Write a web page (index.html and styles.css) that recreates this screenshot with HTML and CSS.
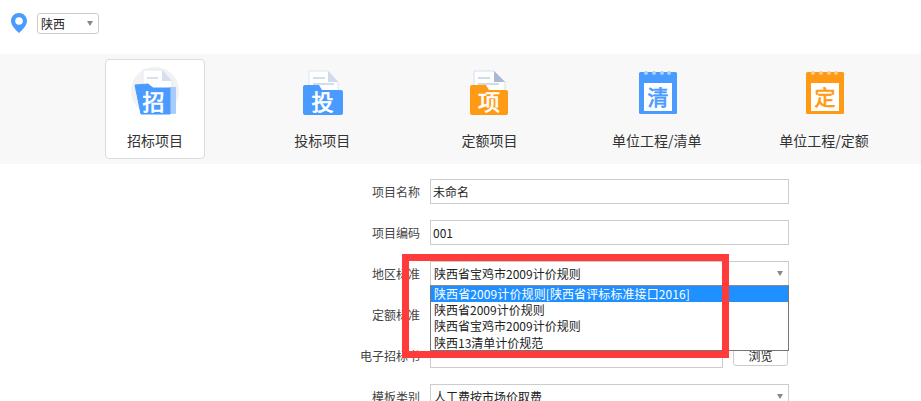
FILE: index.html
```html
<!DOCTYPE html>
<html lang="zh-CN">
<head>
<meta charset="utf-8">
<title>新建项目</title>
<link rel="stylesheet" href="styles.css">
</head>
<body>
<header class="region">
  <svg class="pin" width="16" height="20" viewBox="0 0 16 20" aria-hidden="true">
    <path fill-rule="evenodd" fill="#4a9bff" d="M8 0C3.6 0 0 3.5 0 7.8 0 12.6 4.6 17 8 20c3.4-3 8-7.4 8-12.2C16 3.5 12.4 0 8 0zm0 4.2a3.8 3.8 0 1 1 0 7.6 3.8 3.8 0 0 1 0-7.6z"/>
  </svg>
  <div class="region-select"><span>陕西</span><i class="arrow"></i></div>
</header>

<nav class="tabs">
  <div class="tab active">
    <svg class="tab-icon" width="60" height="60" viewBox="0 0 60 60" aria-hidden="true">
      <circle cx="30" cy="27" r="24" fill="#f1f2f4"/>
      <path d="M18 6h19l10 11v28H18z" fill="#fff" stroke="#e3e9f2"/>
      <path d="M37 6l10 11H37z" fill="#d5dfee"/>
      <path d="M22 13h11v2H22z" fill="#d7e1ee"/>
      <path d="M44 23h7v26a1 1 0 0 1-1 1h-6z" fill="#a8cdfb"/>
      <path d="M10 21l13-1 5 4 17 0v26H16z" fill="#4a9bff" stroke="#4a9bff" stroke-linejoin="round"/>
      <text class="glyph on-fill" x="28.5" y="46" font-size="22">招</text>
    </svg>
    <span class="tab-label">招标项目</span>
  </div>
  <div class="tab">
    <svg class="tab-icon" width="60" height="60" viewBox="0 0 60 60" aria-hidden="true">
      <path d="M17 7h19l10 11v26H17z" fill="#fff" stroke="#dce6f3"/>
      <path d="M36 7l10 11H36z" fill="#cfdbed"/>
      <path d="M21 13h12v2H21zM21 19h21v2H21z" fill="#d3deec"/>
      <path d="M11 23a2 2 0 0 1 2-2h14l3 5h19a2 2 0 0 1 2 2v21a2 2 0 0 1-2 2H13a2 2 0 0 1-2-2z" fill="#4a9bff"/>
      <text class="glyph on-fill" x="30.5" y="46" font-size="22">投</text>
    </svg>
    <span class="tab-label">投标项目</span>
  </div>
  <div class="tab">
    <svg class="tab-icon" width="60" height="60" viewBox="0 0 60 60" aria-hidden="true">
      <path d="M14 7h20l11 11v26H14z" fill="#fff" stroke="#d5e0ee"/>
      <path d="M34 7l11 11H34z" fill="#a9bad3"/>
      <path d="M18 13h12v2H18zM18 19h21v2H18z" fill="#cfdbe9"/>
      <path d="M10 23a2 2 0 0 1 2-2h14l3 5h17a2 2 0 0 1 2 2v21a2 2 0 0 1-2 2H12a2 2 0 0 1-2-2z" fill="#ff9a14"/>
      <text class="glyph on-fill" x="29" y="46" font-size="22">项</text>
    </svg>
    <span class="tab-label">定额项目</span>
  </div>
  <div class="tab">
    <svg class="tab-icon" width="60" height="60" viewBox="0 0 60 60" aria-hidden="true">
      <rect x="12" y="8" width="38" height="42" rx="1.5" fill="#4a9bff"/>
      <g fill="#a9cffc"><circle cx="19" cy="9" r="2"/><circle cx="27" cy="9" r="2"/><circle cx="35" cy="9" r="2"/><circle cx="42" cy="9" r="2"/></g>
      <rect x="17" y="19" width="28" height="28" fill="#fff"/>
      <text class="glyph on-paper-blue" x="31" y="41" font-size="21">清</text>
    </svg>
    <span class="tab-label">单位工程/清单</span>
  </div>
  <div class="tab">
    <svg class="tab-icon" width="60" height="60" viewBox="0 0 60 60" aria-hidden="true">
      <rect x="12" y="8" width="38" height="42" rx="1.5" fill="#ff9a14"/>
      <g fill="#fdc98a"><circle cx="19" cy="9" r="2"/><circle cx="27" cy="9" r="2"/><circle cx="35" cy="9" r="2"/><circle cx="42" cy="9" r="2"/></g>
      <rect x="17" y="19" width="28" height="28" fill="#fff"/>
      <text class="glyph on-paper-orange" x="31" y="41" font-size="21">定</text>
    </svg>
    <span class="tab-label">单位工程/定额</span>
  </div>
</nav>

<main class="form">
  <div class="row">
    <label class="label">项目名称</label>
    <input class="field" type="text" value="未命名" readonly>
  </div>
  <div class="row">
    <label class="label">项目编码</label>
    <input class="field" type="text" value="001" readonly>
  </div>
  <div class="row has-menu">
    <label class="label">地区标准</label>
    <div class="field select"><span>陕西省宝鸡市2009计价规则</span><i class="arrow"></i></div>
    <ul class="menu">
      <li class="selected">陕西省2009计价规则[陕西省评标标准接口2016]</li>
      <li>陕西省2009计价规则</li>
      <li>陕西省宝鸡市2009计价规则</li>
      <li>陕西13清单计价规范</li>
    </ul>
  </div>
  <div class="row">
    <label class="label">定额标准</label>
    <div class="field select"><span></span><i class="arrow"></i></div>
  </div>
  <div class="row">
    <label class="label">电子招标书</label>
    <input class="field short" type="text" readonly>
    <button class="browse" type="button">浏览</button>
  </div>
  <div class="row">
    <label class="label">模板类别</label>
    <div class="field select"><span>人工费按市场价取费</span><i class="arrow"></i></div>
  </div>
</main>

<div class="callout"></div>
</body>
</html>
```

FILE: styles.css
```css
* { box-sizing: border-box; }

html, body {
  margin: 0;
  height: 401px;
  overflow: hidden;
  background: #fff;
}

body {
  position: relative;
  font-family: "Noto Sans CJK SC", "Liberation Sans", sans-serif;
  font-size: 12px;
  color: #333;
}

.region {
  display: flex;
  align-items: flex-start;
  gap: 10px;
  height: 54px;
  padding: 13px 0 0 11px;
}

.region-select {
  display: flex;
  align-items: center;
  justify-content: space-between;
  width: 62px;
  height: 21px;
  padding: 0 5px 0 3px;
  border: 1px solid #ccc;
  border-radius: 3px;
  color: #222;
}

.arrow {
  flex: none;
  width: 0;
  height: 0;
  border-style: solid;
  border-width: 5px 3.5px 0;
  border-color: #888 transparent transparent;
}

.tabs {
  display: flex;
  height: 110px;
  padding: 5px 0 0 71.5px;
  background: #f8f8f8;
}

.tab {
  display: flex;
  flex-direction: column;
  align-items: center;
  flex: none;
  width: 167.25px;
  height: 100px;
  padding-top: 4px;
  border: 1px solid transparent;
}

.tab.active {
  flex: none;
  width: 100px;
  margin: 0 33.6px;
  background: #fff;
  border-color: #d7dee2;
  border-radius: 4px;
}

.tab-icon { display: block; flex: none; }

.glyph {
  font-family: "Noto Sans CJK SC", sans-serif;
  font-weight: 400;
  stroke-width: 0.7px;
  text-anchor: middle;
}

.on-fill { fill: #fff; stroke: #fff; }
.on-paper-blue { fill: #4a9bff; stroke: #4a9bff; }
.on-paper-orange { fill: #ff9a14; stroke: #ff9a14; }

.tab-label {
  margin-top: 6px;
  font-size: 14px;
  line-height: 20px;
  white-space: nowrap;
  color: #333;
}

.form {
  display: flex;
  flex-direction: column;
  gap: 16px;
  padding: 15px 0 0 350px;
}

.row {
  position: relative;
  display: flex;
  align-items: flex-start;
  height: 25px;
}

.label {
  flex: none;
  width: 70px;
  margin-right: 10px;
  line-height: 25px;
  text-align: right;
  color: #444;
}

.field {
  flex: none;
  width: 359px;
  height: 25px;
  margin: 0;
  padding: 0 2px;
  border: 1px solid #ccc;
  border-radius: 0;
  outline: 0;
  font: inherit;
  line-height: 23px;
  color: #222;
  background: #fff;
}

.field.short { width: 293px; }

.select {
  display: flex;
  align-items: center;
  justify-content: space-between;
  padding: 0 5px 0 3px;
}

.browse {
  flex: none;
  width: 55px;
  height: 22px;
  margin: 1px 0 0 10px;
  padding: 1px 0 0;
  border: 1px solid #ccc;
  border-radius: 3px;
  font: inherit;
  line-height: 20px;
  color: #222;
  background: #fff;
}

.menu {
  position: absolute;
  z-index: 1;
  left: 80px;
  top: 24px;
  width: 359px;
  height: 66px;
  margin: 0;
  padding: 0;
  list-style: none;
  background: #fff;
  border: 1px solid #767676;
  border-top-color: #8a8a8a;
  color: #222;
}

.menu li {
  height: 16.2px;
  padding-left: 3px;
  line-height: 16px;
  white-space: nowrap;
}

.menu li.selected {
  background: #1e90ff;
  color: #fff;
  letter-spacing: 0.1px;
}

.callout {
  position: absolute;
  z-index: 2;
  left: 402px;
  top: 254px;
  width: 327px;
  height: 104px;
  border: 7px solid #ff3b3b;
}
```
